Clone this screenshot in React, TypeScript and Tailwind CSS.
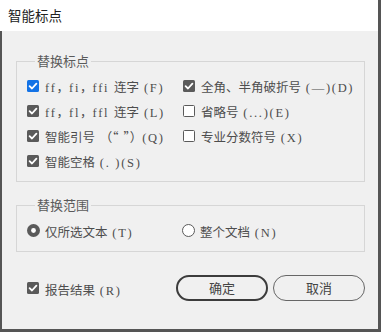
import React from 'react';

const cjk = { fontFamily: '"Noto Sans CJK SC", sans-serif' };
const CJK_RUN = /[\u3000-\u9fff\uff00-\uffef\u201c\u201d]+|[^\u3000-\u9fff\uff00-\uffef\u201c\u201d]+/g;
const IS_CJK = /[\u3000-\u9fff\uff00-\uffef\u201c\u201d]/;

// CJK runs in Noto Sans CJK, Latin runs in a spaced-out serif like the dialog's font
const T = ({ text }: { text: string }) => {
  const parts = text.match(CJK_RUN) || [];
  return (
    <span className="whitespace-pre">
      {parts.map((p, i) =>
        IS_CJK.test(p) ? (
          <span key={i} className="text-[12.5px]" style={cjk}>{p}</span>
        ) : (
          <span key={i} className="text-[12.5px] tracking-[1.7px]" style={{ fontFamily: '"Liberation Serif", serif' }}>{p}</span>
        )
      )}
    </span>
  );
};

const Check = ({ checked, focus }: { checked: boolean; focus?: boolean }) => (
  <svg width="12" height="12" viewBox="0 0 12 12" className="shrink-0">
    {checked ? (
      <>
        <rect x="0" y="0" width="12" height="12" rx="1.5" fill={focus ? '#1473e6' : '#5a5a5a'} />
        <path d="M2.6 6.2 L5 8.5 L9.4 3.6" fill="none" stroke="#fff" strokeWidth="1.8" strokeLinecap="round" strokeLinejoin="round" />
      </>
    ) : (
      <rect x="0.5" y="0.5" width="11" height="11" rx="1" fill="#fff" stroke="#5a5a5a" strokeWidth="1" />
    )}
  </svg>
);

const Radio = ({ checked }: { checked: boolean }) => (
  <svg width="13" height="13" viewBox="0 0 13 13" className="shrink-0">
    {checked ? (
      <>
        <circle cx="6.5" cy="6.5" r="6.5" fill="#5a5a5a" />
        <circle cx="6.5" cy="6.5" r="2.4" fill="#fff" />
      </>
    ) : (
      <circle cx="6.5" cy="6.5" r="6" fill="#fff" stroke="#5a5a5a" strokeWidth="1" />
    )}
  </svg>
);

const Row = ({ text, checked, focus }: { text: string; checked: boolean; focus?: boolean }) => (
  <div className="flex h-[25px] items-center gap-[6px] whitespace-nowrap">
    <Check checked={checked} focus={focus} />
    <T text={text} />
  </div>
);

export default function App() {
  return (
    <div className="flex h-[332px] w-[381px] flex-col text-[#4d4d4d]" style={cjk}>
      {/* title bar */}
      <div className="flex h-[31px] items-center border-r-[3px] border-[#555] bg-white pl-2 text-[13.5px] text-[#222]">
        智能标点
      </div>

      <div className="flex flex-1 flex-col border-b-[3px] border-l-2 border-r-[3px] border-[#555] bg-[#f0f0f0] pl-[14px] pr-[13px] pt-[21px]">
        <fieldset className="border border-[#d6d6d6] pb-2 pl-[10px] pt-[3px]">
          <legend className="ml-[8px] px-[2px] text-[13px] leading-[18px] text-[#5a5a5a]">替换标点</legend>
          <div className="grid grid-cols-[156px_1fr]">
            <Row checked focus text="ff，fi，ffi 连字 (F)" />
            <Row checked text="全角、半角破折号 (—)(D)" />
            <Row checked text="ff，fl，ffl 连字 (L)" />
            <Row checked={false} text="省略号 (...)(E)" />
            <Row checked text="智能引号 （“ ”）(Q)" />
            <Row checked={false} text="专业分数符号 (X)" />
            <Row checked text="智能空格 (. )(S)" />
          </div>
        </fieldset>

        <fieldset className="mt-[14px] border border-[#d6d6d6] pb-2 pl-[10px] pt-[4px]">
          <legend className="ml-[8px] px-[2px] text-[13px] leading-[18px] text-[#5a5a5a]">替换范围</legend>
          <div className="grid grid-cols-[155px_1fr]">
            <div className="flex h-[25px] items-center gap-[5px] whitespace-nowrap">
              <Radio checked />
              <T text="仅所选文本 (T)" />
            </div>
            <div className="flex h-[25px] items-center gap-[5px] whitespace-nowrap">
              <Radio checked={false} />
              <T text="整个文档 (N)" />
            </div>
          </div>
        </fieldset>

        <div className="mt-[23px] flex items-center pl-[11px]">
          <div className="flex flex-1 items-center gap-[6px]">
            <Check checked />
            <T text="报告结果 (R)" />
          </div>
          <div className="flex gap-[5px]">
            <button className="flex h-[26px] w-[92px] items-center justify-center rounded-full border-2 border-[#3c3c3c] text-[13px] text-[#444]">
              确定
            </button>
            <button className="flex h-[26px] w-[92px] items-center justify-center rounded-full border border-[#666] text-[13px] text-[#444]">
              取消
            </button>
          </div>
        </div>
      </div>
    </div>
  );
}
